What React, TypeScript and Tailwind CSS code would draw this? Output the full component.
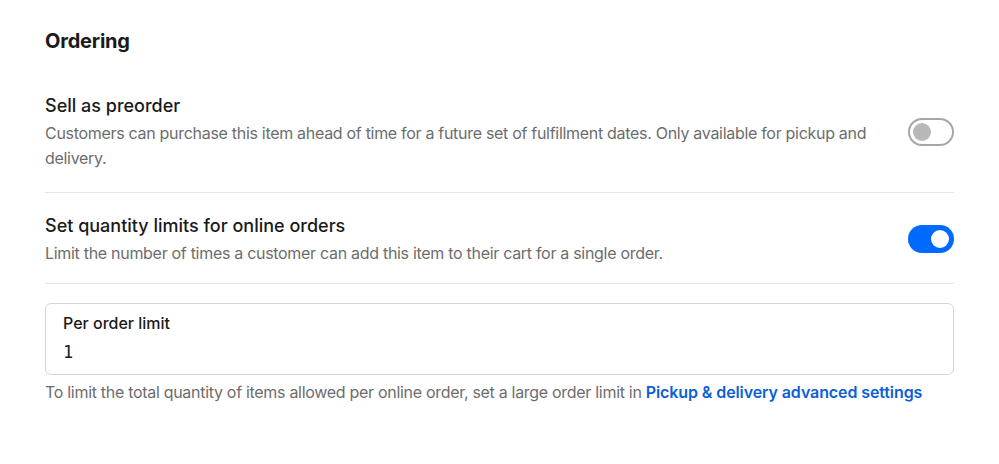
import React from 'react';

const Toggle = ({ on }: { on: boolean }) =>
  on ? (
    <div className="w-[46px] h-[28px] rounded-full bg-[#006aff] flex items-center justify-end px-[5px] shrink-0">
      <div className="w-[18px] h-[18px] rounded-full bg-white" />
    </div>
  ) : (
    <div className="w-[46px] h-[28px] rounded-full border-2 border-[#a6a6a6] bg-white flex items-center px-[3px] shrink-0">
      <div className="w-[18px] h-[18px] rounded-full bg-[#b8b8b8]" />
    </div>
  );

const App = () => {
  return (
    <div className="w-[999px] h-[464px] bg-white font-['Inter',sans-serif] text-[#1a1a1a]">
      <div className="pl-[45px] pr-[45px] pt-[27px]">
        <h2 className="text-[20px] leading-[28px] font-bold tracking-[-0.01em]">Ordering</h2>

        <div className="mt-[37px] flex items-center justify-between gap-10 pb-[21px] border-b border-[#e6e6e6]">
          <div>
            <p className="text-[18px] leading-[28px] font-medium">Sell as preorder</p>
            <p className="mt-[1px] text-[16px] leading-[25px] text-[#6d6d6d] tracking-[-0.3px]">
              Customers can purchase this item ahead of time for a future set of fulfillment dates. Only available for pickup and
              delivery.
            </p>
          </div>
          <Toggle on={false} />
        </div>

        <div className="pt-[19px] pb-[17px] flex items-center justify-between gap-10 border-b border-[#e6e6e6]">
          <div>
            <p className="text-[18px] leading-[28px] font-medium">Set quantity limits for online orders</p>
            <p className="mt-[1px] text-[16px] leading-[25px] text-[#6d6d6d] tracking-[-0.3px]">
              Limit the number of times a customer can add this item to their cart for a single order.
            </p>
          </div>
          <Toggle on={true} />
        </div>

        <div className="mt-[19px] h-[72px] rounded-[6px] border border-[#d6d6d6] px-[17px] pt-[8px]">
          <p className="text-[16px] leading-[22px] font-medium">Per order limit</p>
          <p className="mt-[7px] text-[17px] leading-[22px] font-['DejaVu_Sans_Mono',monospace]">1</p>
        </div>

        <p className="mt-[5px] text-[16px] leading-[24px] text-[#6d6d6d] tracking-[-0.3px]">
          To limit the total quantity of items allowed per online order, set a large order limit in{' '}
          <a href="#" className="font-semibold text-[#0b5fd8] tracking-[-0.1px]">Pickup &amp; delivery advanced settings</a>
        </p>
      </div>
    </div>
  );
};

export default App;
